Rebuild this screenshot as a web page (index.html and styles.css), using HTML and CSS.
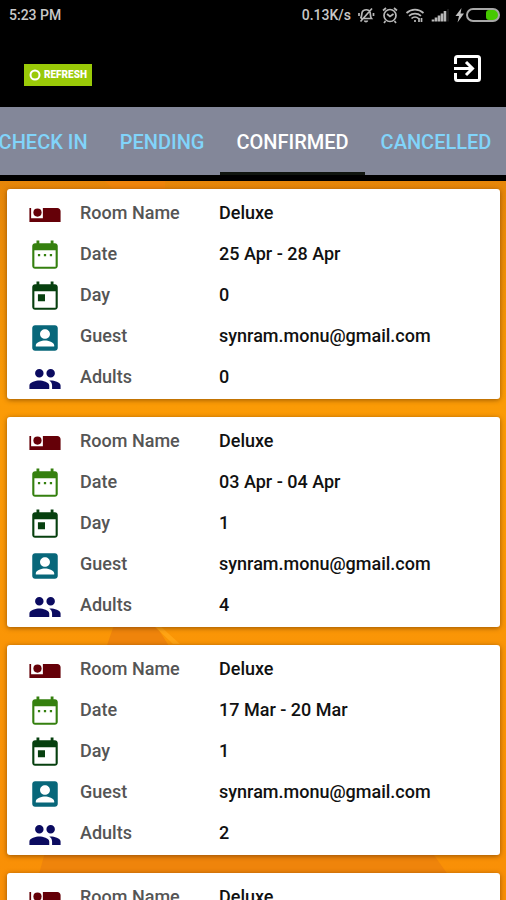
FILE: index.html
```html
<!DOCTYPE html>
<html lang="en">
<head>
<meta charset="utf-8">
<meta name="viewport" content="width=device-width, initial-scale=1">
<title>Bookings</title>
<link rel="stylesheet" href="styles.css">
</head>
<body>
<svg class="symbols" aria-hidden="true">
  <symbol id="bed" viewBox="0 0 24 24"><path d="M1 7h1.200v7.300h8.300V7h10.200c1.300 0 2.300 1 2.300 2.300V17H1z"/><circle cx="6.700" cy="10.300" r="2.900"/></symbol>
  <symbol id="date" viewBox="0 0 24 24"><path d="M7 10.500h1.600v1.600H7zm4.200 0h1.600v1.600h-1.600zm4.200 0H17v1.600h-1.600zM19 3h-1V1h-2v2H8V1H6v2H5c-1.110 0-2 .9-2 2v14c0 1.100.89 2 2 2h14c1.100 0 2-.9 2-2V5c0-1.100-.9-2-2-2zm.500 16.500h-15V8h15z"/></symbol>
  <symbol id="day" viewBox="0 0 24 24"><path d="M19 3h-1V1h-2v2H8V1H6v2H5c-1.110 0-2 .9-2 2v14c0 1.100.89 2 2 2h14c1.100 0 2-.9 2-2V5c0-1.100-.9-2-2-2zm.500 16.500h-15V8h15zM7 10h5v5H7z"/></symbol>
  <symbol id="guest" viewBox="0 0 24 24"><path d="M3 5v14c0 1.100.89 2 2 2h14c1.100 0 2-.9 2-2V5c0-1.100-.9-2-2-2H5c-1.110 0-2 .9-2 2zm12.500 4.200c0 1.900-1.600 3.400-3.500 3.400s-3.500-1.500-3.500-3.400S10.100 5.800 12 5.800s3.500 1.500 3.500 3.400zM5.500 17.200c0-2.200 4.300-3.400 6.500-3.400s6.500 1.200 6.500 3.400v.8h-13z"/></symbol>
  <symbol id="adults" viewBox="0 0 24 24"><path d="M16 11c1.660 0 2.990-1.340 2.990-3S17.660 5 16 5s-3 1.340-3 3 1.340 3 3 3zm-8 0c1.660 0 2.990-1.340 2.990-3S9.660 5 8 5 5 6.340 5 8s1.340 3 3 3zm0 2c-2.330 0-7 1.170-7 3.500V19h14v-2.500C15 14.170 10.330 13 8 13zm8 0c-.29 0-.62.020-.97.050C16.190 13.890 17 15.020 17 16.500V19h6v-2.500c0-2.330-4.670-3.500-7-3.500z"/></symbol>
</svg>
<div class="app">
  <div class="status">
    <span>5:23 PM</span>
    <div class="indicators">
      <span>0.13K/s</span>
      <svg class="glyph" viewBox="0 0 18 18" aria-hidden="true"><path d="M4 12.500h10.500c-1.500-2-.8-4.500-1.500-6.500-1-3-6.500-3-7.800 0-.7 2-.1 4.500-1.700 6.500M7.500 14.500c.5 1.500 2.500 1.500 3 0M3.500 15.500 15 2.500M2 7v3M16.500 7v3"/></svg>
      <svg class="glyph" viewBox="0 0 18 18" aria-hidden="true"><circle cx="9" cy="9.500" r="6"/><path d="M2 4.500 5 2M16 4.500 13 2M6 8l3 2.500L12.500 8M4.500 15l-1.500 2M13.500 15l1.500 2"/></svg>
      <svg class="glyph wifi" viewBox="0 0 20 18" aria-hidden="true"><path d="M1.500 7c5-4.500 12-4.500 17 0M4 9.800c3.500-3 8.500-3 12 0M6.500 12.500c2-2 5-2 7 0M10 14v2M14 12v4M16.500 12v4"/></svg>
      <svg class="glyph signal" viewBox="0 0 18 18" aria-hidden="true"><path d="M2 15.500v-2M5 15.500v-4M8 15.500v-6M11 15.500v-8M14 15.500V5"/><path class="faint" d="M17 15.500V3"/></svg>
      <svg class="power" viewBox="0 0 46 18" aria-hidden="true"><path class="bolt" d="M6.500 2 .5 10h3.500l-1.500 6.500L9 7.500H5.500z"/><rect class="fill" x="31" y="4" width="12" height="10" rx="3"/><rect class="shell" x="12" y="3" width="32" height="12" rx="6"/></svg>
    </div>
  </div>
  <header class="bar">
    <button class="refresh" type="button"><svg viewBox="0 0 12 12" aria-hidden="true"><circle cx="6" cy="6" r="4.500"/></svg>REFRESH</button>
    <button class="exit" type="button" aria-label="Log out"><svg viewBox="0 0 27 27" aria-hidden="true"><path d="M1.500 9V3.500q0-2 2-2h20q2 0 2 2v20q0 2-2 2h-20q-2 0-2-2V18M0 13.500h18M12 7l6.500 6.500L12 20"/></svg></button>
  </header>
  <nav class="tabs">
    <a href="#checkin">CHECK IN</a>
    <a href="#pending">PENDING</a>
    <a class="active" href="#confirmed" aria-current="page">CONFIRMED</a>
    <a href="#cancelled">CANCELLED</a>
  </nav>
  <main class="list">
    <svg class="backdrop" viewBox="0 0 506 719" preserveAspectRatio="none" aria-hidden="true"><path class="dark" d="M105 0h60v8h-52zM116 438h36l22 35H104zM48 660h376l42 59H32z"/><path class="light" d="M152 443h6l22 20h-7z"/></svg>
    <article class="card">
      <dl>
        <div class="row"><dt><svg class="bed"><use href="#bed"/></svg>Room Name</dt><dd>Deluxe</dd></div>
        <div class="row"><dt><svg class="date"><use href="#date"/></svg>Date</dt><dd>25 Apr - 28 Apr</dd></div>
        <div class="row"><dt><svg class="day"><use href="#day"/></svg>Day</dt><dd>0</dd></div>
        <div class="row"><dt><svg class="guest"><use href="#guest"/></svg>Guest</dt><dd>synram.monu@gmail.com</dd></div>
        <div class="row"><dt><svg class="adults"><use href="#adults"/></svg>Adults</dt><dd>0</dd></div>
      </dl>
    </article>
    <article class="card">
      <dl>
        <div class="row"><dt><svg class="bed"><use href="#bed"/></svg>Room Name</dt><dd>Deluxe</dd></div>
        <div class="row"><dt><svg class="date"><use href="#date"/></svg>Date</dt><dd>03 Apr - 04 Apr</dd></div>
        <div class="row"><dt><svg class="day"><use href="#day"/></svg>Day</dt><dd>1</dd></div>
        <div class="row"><dt><svg class="guest"><use href="#guest"/></svg>Guest</dt><dd>synram.monu@gmail.com</dd></div>
        <div class="row"><dt><svg class="adults"><use href="#adults"/></svg>Adults</dt><dd>4</dd></div>
      </dl>
    </article>
    <article class="card">
      <dl>
        <div class="row"><dt><svg class="bed"><use href="#bed"/></svg>Room Name</dt><dd>Deluxe</dd></div>
        <div class="row"><dt><svg class="date"><use href="#date"/></svg>Date</dt><dd>17 Mar - 20 Mar</dd></div>
        <div class="row"><dt><svg class="day"><use href="#day"/></svg>Day</dt><dd>1</dd></div>
        <div class="row"><dt><svg class="guest"><use href="#guest"/></svg>Guest</dt><dd>synram.monu@gmail.com</dd></div>
        <div class="row"><dt><svg class="adults"><use href="#adults"/></svg>Adults</dt><dd>2</dd></div>
      </dl>
    </article>
    <article class="card">
      <dl>
        <div class="row"><dt><svg class="bed"><use href="#bed"/></svg>Room Name</dt><dd>Deluxe</dd></div>
      </dl>
    </article>
  </main>
</div>
</body>
</html>
```
FILE: styles.css
```css
* { box-sizing: border-box; }
body {
  margin: 0;
  background: #000;
  font-family: Roboto, "Liberation Sans", sans-serif;
  font-weight: 500;
}
.symbols { display: none; }
.app {
  display: flex;
  flex-direction: column;
  height: 100vh;
  overflow: hidden;
}
.status {
  display: flex;
  justify-content: space-between;
  align-items: center;
  height: 30px;
  padding: 0 5px 0 9px;
  color: #c8c8c8;
  font-size: 14px;
}
.indicators { display: flex; align-items: center; gap: 6px; }
.glyph {
  width: 18px;
  height: 18px;
  fill: none;
  stroke: #b8b8b8;
  stroke-width: 1.7;
}
.wifi { width: 20px; }
.signal { stroke-width: 2.6; }
.faint { stroke: #333; stroke-width: 1; }
.power { width: 46px; height: 18px; }
.bolt { fill: #c0c0c0; }
.fill { fill: #46c800; }
.shell { fill: none; stroke: #a8a8a8; stroke-width: 2; }

.bar {
  display: flex;
  justify-content: space-between;
  align-items: center;
  height: 77px;
  padding: 0 25px 0 24px;
}
button { border: 0; padding: 0; font-family: inherit; }
.refresh {
  display: flex;
  align-items: center;
  justify-content: center;
  gap: 3px;
  width: 68px;
  height: 22px;
  margin-top: 12px;
  background: #9aca08;
  color: #fff;
  font-size: 10px;
  font-weight: 900;
}
.refresh svg { width: 12px; height: 12px; fill: none; stroke: #fff; stroke-width: 2; }
.exit { width: 27px; height: 27px; background: none; }
.exit svg { display: block; width: 27px; height: 27px; fill: none; stroke: #fff; stroke-width: 3; }

.tabs {
  display: flex;
  flex: none;
  justify-content: center;
  height: 68px;
  background: #838799;
  overflow: hidden;
}
.tabs a {
  flex: none;
  padding: 0 16px;
  border-bottom: 3px solid transparent;
  color: #81d4fa;
  font-size: 20px;
  line-height: 70px;
  text-decoration: none;
}
.tabs a:first-child { padding-left: 0; }
.tabs .active { color: #fff; border-color: #10150f; }

.list {
  position: relative;
  display: flex;
  flex: 1;
  flex-direction: column;
  gap: 18px;
  min-height: 0;
  margin-top: 6px;
  padding: 8px 6px 0 7px;
  background: linear-gradient(#e68609, #fb9b06 220px, #f98f06);
  overflow: hidden;
}
.backdrop { position: absolute; inset: 0; width: 100%; height: 100%; }
.dark { fill: #ef840b; }
.light { fill: #ffa414; }
.card {
  position: relative;
  flex: none;
  padding: 9px 21px 3px;
  border-radius: 3px;
  background: #fff;
  box-shadow: 0 1px 5px rgba(90, 45, 0, .6);
}
dl { display: grid; gap: 7px; margin: 0; }
.row {
  display: grid;
  grid-template-columns: 191px 1fr;
  height: 34px;
  font-size: 18px;
  line-height: 30px;
}
dt { display: flex; gap: 18px; color: #555; }
dt svg { width: 34px; height: 34px; fill: currentColor; }
dd { margin: 0; color: #111; }
dt .bed { color: #650008; }
dt .date { color: #35800f; }
dt .day { color: #07400f; }
dt .guest { color: #08677a; }
dt .adults { color: #0b0b60; }
```
